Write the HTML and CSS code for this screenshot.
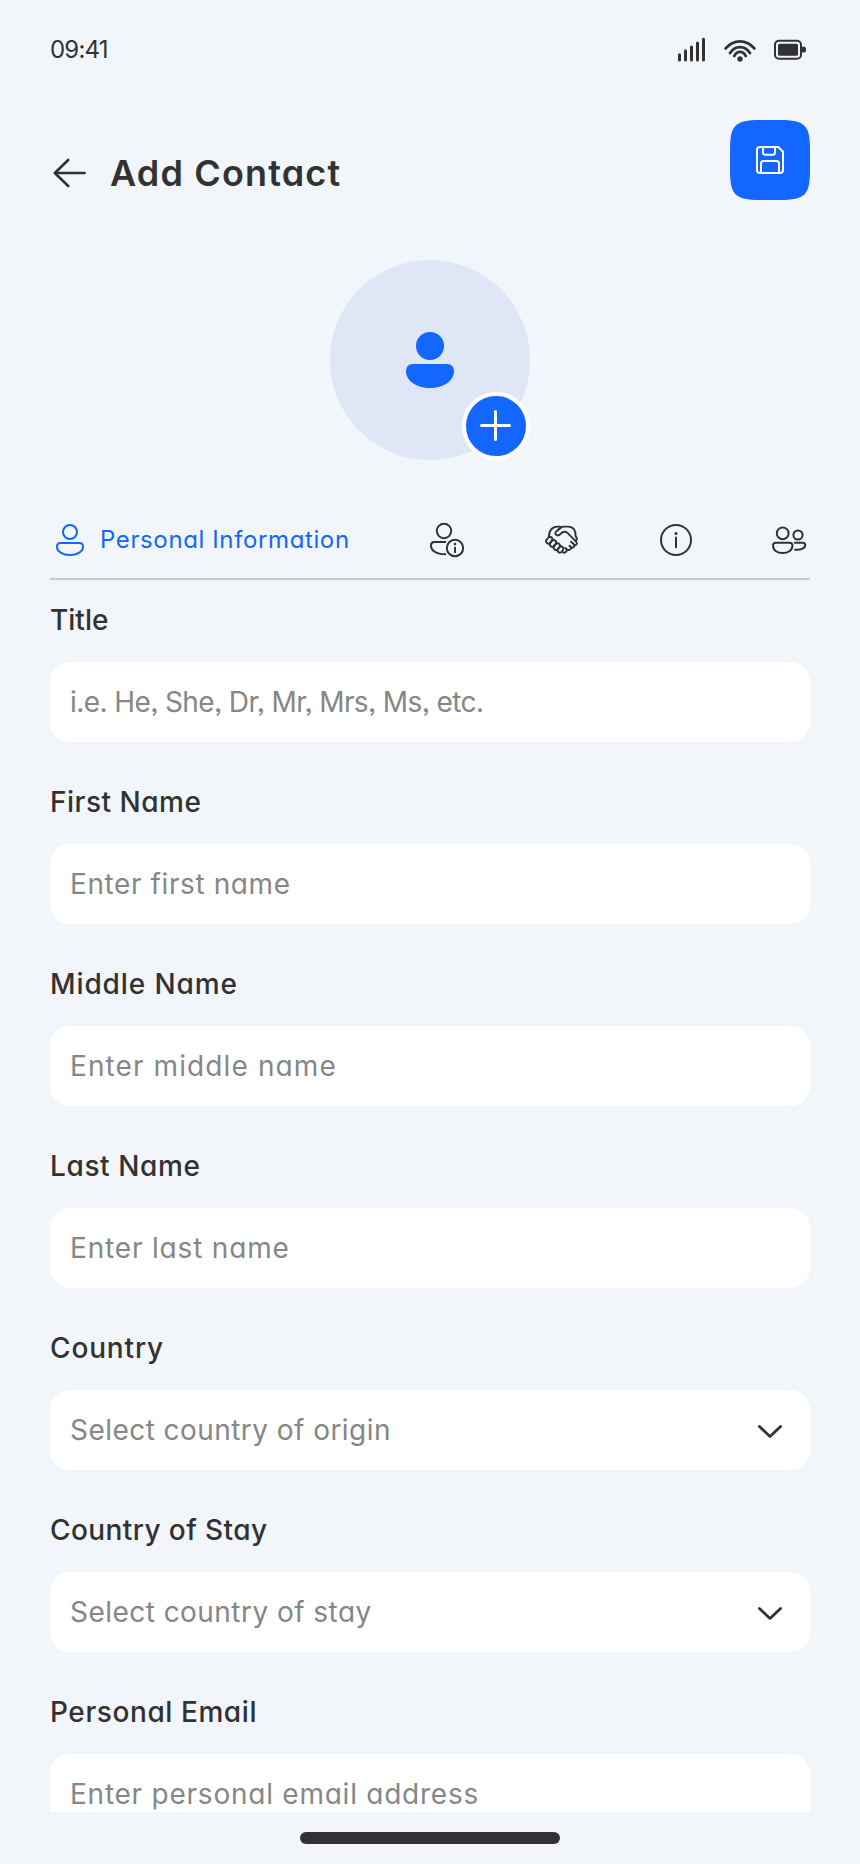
FILE: index.html
```html
<!DOCTYPE html>
<html lang="en">
<head>
<meta charset="utf-8">
<title>Add Contact</title>
<link rel="stylesheet" href="styles.css">
</head>
<body>
<div class="screen">
  <div class="status-bar">
    <span class="clock">09:41</span>
    <svg class="status-icons" width="130" height="26" viewBox="0 0 130 26" fill="none">
      <g class="fill-dark">
        <rect x="2" y="17.3" width="3" height="8.3" rx="1.5"/>
        <rect x="8" y="13.3" width="3" height="12.3" rx="1.5"/>
        <rect x="14" y="9.5" width="3" height="16.1" rx="1.5"/>
        <rect x="20" y="5.6" width="3" height="20" rx="1.5"/>
        <rect x="26" y="1.7" width="3" height="23.9" rx="1.5"/>
        <circle cx="64" cy="23" r="2.7"/>
        <rect x="102" y="7.8" width="20" height="12" rx="1.5"/>
        <path d="M125.5 10.8h2.7a1.8 1.8 0 0 1 1.8 1.8v2.2a1.8 1.8 0 0 1-1.8 1.8h-2.7z"/>
      </g>
      <g class="stroke-dark" stroke-width="2.8">
        <path d="M49.6 12.4C57.6 2.9 70.4 2.9 78.4 12.4"/>
        <path d="M54 17C59.4 9.2 68.6 9.2 74 17"/>
        <path d="M58.3 20C60.9 14.5 67.1 14.5 69.7 20"/>
      </g>
      <rect class="stroke-dark" x="99" y="4.8" width="26" height="18" rx="4" stroke-width="2"/>
    </svg>
  </div>

  <header class="header">
    <svg class="back" width="34" height="30" viewBox="0 0 34 30" fill="none">
      <path class="stroke-dark" stroke-width="2.6" d="M31.6 15H1.8M15.2 2 1.8 15 15.2 28"/>
    </svg>
    <h1 class="title">Add Contact</h1>
    <svg class="save" width="80" height="80" viewBox="0 0 80 80" fill="none">
      <path class="fill-blue" d="M0 30C0 5 5 0 30 0H50C75 0 80 5 80 30V50C80 75 75 80 50 80H30C5 80 0 75 0 50Z"/>
      <g stroke="#fff" stroke-width="2" stroke-linejoin="round">
        <path d="M30 27H48.3L53 31.7V50A3 3 0 0 1 50 53H30A3 3 0 0 1 27 50V30A3 3 0 0 1 30 27Z"/>
        <path d="M33 27V32.5A2 2 0 0 0 35 34.7H43A2 2 0 0 0 45 32.5V27"/>
        <path d="M31 53V43.5A2.5 2.5 0 0 1 33.5 41H46.5A2.5 2.5 0 0 1 49 43.5V53"/>
      </g>
    </svg>
  </header>

  <div class="avatar">
    <svg width="48" height="56" viewBox="0 0 48 56">
      <g class="fill-blue">
        <circle cx="24" cy="14" r="14"/>
        <path d="M7 32H41Q48 32 48 39.5C48 48.5 37.5 56 24 56S0 48.5 0 39.5Q0 32 7 32Z"/>
      </g>
    </svg>
    <div class="avatar-add">
      <svg width="32" height="32" viewBox="0 0 32 32"><path d="M15.5 1.5V29.5M1.500 15.5H29.5" stroke="#fff" stroke-width="3" stroke-linecap="round"/></svg>
    </div>
  </div>

  <nav class="tabs">
    <div class="tab tab-active">
      <svg width="28" height="32" viewBox="0 0 28 32" fill="none" stroke="currentColor" stroke-width="2">
        <circle cx="14" cy="8" r="7"/>
        <path d="M4.5 19H23.5Q27 19 27 22.5C27 27.5 21.5 31 14 31S1 27.5 1 22.5Q1 19 4.5 19Z"/>
      </svg>
      <span>Personal Information</span>
    </div>
    <svg width="36" height="36" viewBox="0 0 36 36" fill="none">
      <g class="stroke-dark" stroke-width="2">
        <circle cx="15" cy="9" r="7.2"/>
        <path d="M16.3 20H5.5Q2 20 2 23.5C2 28.5 7 32.3 16.3 32.3"/>
        <circle cx="26" cy="26" r="8.2"/>
        <path d="M26 25.5V30.3"/>
      </g>
      <circle class="fill-dark" cx="26" cy="22" r="1.3"/>
    </svg>
    <svg width="36" height="32" viewBox="0 0 36 32" fill="none">
      <g class="stroke-dark" stroke-width="1.9">
        <path d="M5 13C4.600 7 8 2.600 13.500 2.600H16"/>
        <path d="M17.500 3.200 12.400 7.200C9.600 9.600 12.800 13 16 10.400L17.500 9C19.500 7.500 21.700 7.600 23.500 8.900L32.300 17.800C34 19.700 32 22 30 20.500L27 17.800"/>
        <path d="M14.500 5.500C16 3.400 17.500 2.600 20 2.600H24.500C29.500 3 31.700 6.500 31.500 11.500L33 14.900 31.600 17"/>
        <path d="M30 20.500C31 23 28.800 24.700 26.700 22.800L25.500 21.700M27 23C27.500 25.500 25 27 22.800 25.200L21.500 24M23 25.500C22.500 28.500 20.500 29.500 18.500 28"/>
        <rect x="2.9" y="12.6" width="4.6" height="7.2" rx="2.3" transform="rotate(38 5.2 16.2)"/>
        <rect x="6.7" y="15.8" width="4.6" height="7.2" rx="2.3" transform="rotate(38 9 19.4)"/>
        <rect x="10.5" y="19" width="4.6" height="7.2" rx="2.3" transform="rotate(38 12.8 22.6)"/>
        <rect x="14.3" y="22.2" width="4.4" height="6.6" rx="2.2" transform="rotate(38 16.5 25.5)"/>
      </g>
    </svg>
    <svg width="32" height="32" viewBox="0 0 32 32" fill="none">
      <circle class="stroke-dark" cx="16" cy="16" r="15" stroke-width="2"/>
      <path class="stroke-dark" stroke-width="2" d="M16 13.5V23.3"/>
      <circle class="fill-dark" cx="16" cy="9.5" r="1.5"/>
    </svg>
    <svg width="36" height="30" viewBox="0 0 36 30" fill="none">
      <g class="stroke-dark" stroke-width="2">
        <circle cx="11.7" cy="8.3" r="5.9"/>
        <path d="M5 17.7H18.5Q21.500 17.7 21.5 20.5C21.5 25 17.5 28 11.7 28S2 25 2 20.500Q2 17.7 5 17.7Z"/>
        <circle cx="27" cy="10" r="4.6"/>
        <path d="M23.8 17.7H31.5Q34.2 17.7 34.2 20C34.2 23 30.5 25.3 24 24.7"/>
      </g>
    </svg>
  </nav>

  <main class="form">
    <div class="field"><label class="t-title">Title</label><div class="input t-title-hint">i.e. He, She, Dr, Mr, Mrs, Ms, etc.</div></div>
    <div class="field"><label class="t-first">First Name</label><div class="input t-first-hint">Enter first name</div></div>
    <div class="field"><label class="t-middle">Middle Name</label><div class="input t-middle-hint">Enter middle name</div></div>
    <div class="field"><label class="t-last">Last Name</label><div class="input t-last-hint">Enter last name</div></div>
    <div class="field"><label class="t-country">Country</label><div class="input t-country-hint">Select country of origin
      <svg class="chevron" width="26" height="16" viewBox="0 0 26 16" fill="none"><path class="stroke-dark" stroke-width="2.8" d="M2.4 2.4 13 12.4 23.6 2.4"/></svg></div></div>
    <div class="field"><label class="t-stay">Country of Stay</label><div class="input t-stay-hint">Select country of stay
      <svg class="chevron" width="26" height="16" viewBox="0 0 26 16" fill="none"><path class="stroke-dark" stroke-width="2.8" d="M2.4 2.4 13 12.4 23.6 2.4"/></svg></div></div>
    <div class="field"><label class="t-email">Personal Email</label><div class="input t-email-hint">Enter personal email address</div></div>
  </main>

  <div class="home-indicator"></div>
</div>
</body>
</html>
```
FILE: styles.css
```css
* { box-sizing: border-box; }

body {
  margin: 0;
  background: #f2f5fa;
  color: #323232;
  font-family: Inter, "Open Sans", sans-serif;
  font-feature-settings: "cv11", "ss03";
}

svg { display: block; flex: none; }

.fill-dark { fill: #323232; }
.fill-blue { fill: #1366ff; }
.stroke-dark { stroke: #323232; stroke-linecap: round; stroke-linejoin: round; }

.screen {
  display: flex;
  flex-direction: column;
  width: 860px;
  height: 1864px;
  padding: 0 50px;
  overflow: hidden;
}

.status-bar {
  display: flex;
  justify-content: space-between;
  align-items: center;
  height: 98px;
  margin-bottom: 22px;
}
.clock { font-size: 24px; letter-spacing: -0.8px; }
.status-icons { margin: 0 4px 0 0; }

.header {
  display: flex;
  height: 80px;
}
.back { margin: 38px 0 0 3px; }
.title {
  flex: 1;
  margin: 31px 0 0 23px;
  font-size: 36px;
  font-weight: 600;
  line-height: 44px;
  letter-spacing: 1.15px;
}

.avatar {
  position: relative;
  display: flex;
  flex: none;
  justify-content: center;
  align-self: center;
  width: 200px;
  height: 200px;
  margin-top: 60px;
  padding-top: 72px;
  border-radius: 50%;
  background: #dfe6f6;
}
.avatar-add {
  position: absolute;
  left: 132px;
  top: 132px;
  display: flex;
  width: 68px;
  height: 68px;
  padding: 14px;
  border: 4px solid #fff;
  border-radius: 50%;
  background: #1366ff;
}

.tabs {
  display: flex;
  flex: none;
  align-items: center;
  justify-content: space-between;
  height: 80px;
  margin-top: 40px;
  padding: 2px 3px 0 6px;
  border-bottom: 2px solid #c9c9c9;
}
.tab { display: flex; align-items: center; gap: 16px; }
.tab-active { color: #1366ff; font-size: 24px; letter-spacing: 0.62px; }
.tab-active span { margin-top: -1px; }

.form {
  display: flex;
  flex: none;
  flex-direction: column;
  gap: 36px;
  height: 1232px;
  padding-top: 18px;
  overflow: hidden;
}
.field {
  display: flex;
  flex: none;
  flex-direction: column;
  gap: 20px;
  height: 146px;
}
.field label {
  height: 44px;
  font-size: 28px;
  font-weight: 500;
  line-height: 44px;
}
.input {
  display: flex;
  flex: none;
  justify-content: space-between;
  align-items: center;
  height: 80px;
  padding: 0 27px 1px 20px;
  border-radius: 20px;
  background: #fff;
  color: #868686;
  font-size: 28px;
}
.chevron { margin-top: 5px; }

/* Tracking tuned per string */
.t-first { letter-spacing: 0.52px; }
.t-middle { letter-spacing: 0.9px; }
.t-last { letter-spacing: 0.62px; }
.t-country { letter-spacing: 0.843px; }
.t-stay { letter-spacing: 0.417px; }
.t-email { letter-spacing: 0.58px; }
.t-title-hint { letter-spacing: -0.58px; }
.t-first-hint { letter-spacing: 0.6px; }
.t-middle-hint { letter-spacing: 1.1px; }
.t-last-hint { letter-spacing: 0.83px; }
.t-country-hint { letter-spacing: 0.45px; }
.t-stay-hint { letter-spacing: 0.46px; }
.t-email-hint { letter-spacing: 0.76px; }

.home-indicator {
  flex: none;
  align-self: center;
  width: 260px;
  height: 12px;
  margin-top: 20px;
  border-radius: 6px;
  background: #323232;
}
```
